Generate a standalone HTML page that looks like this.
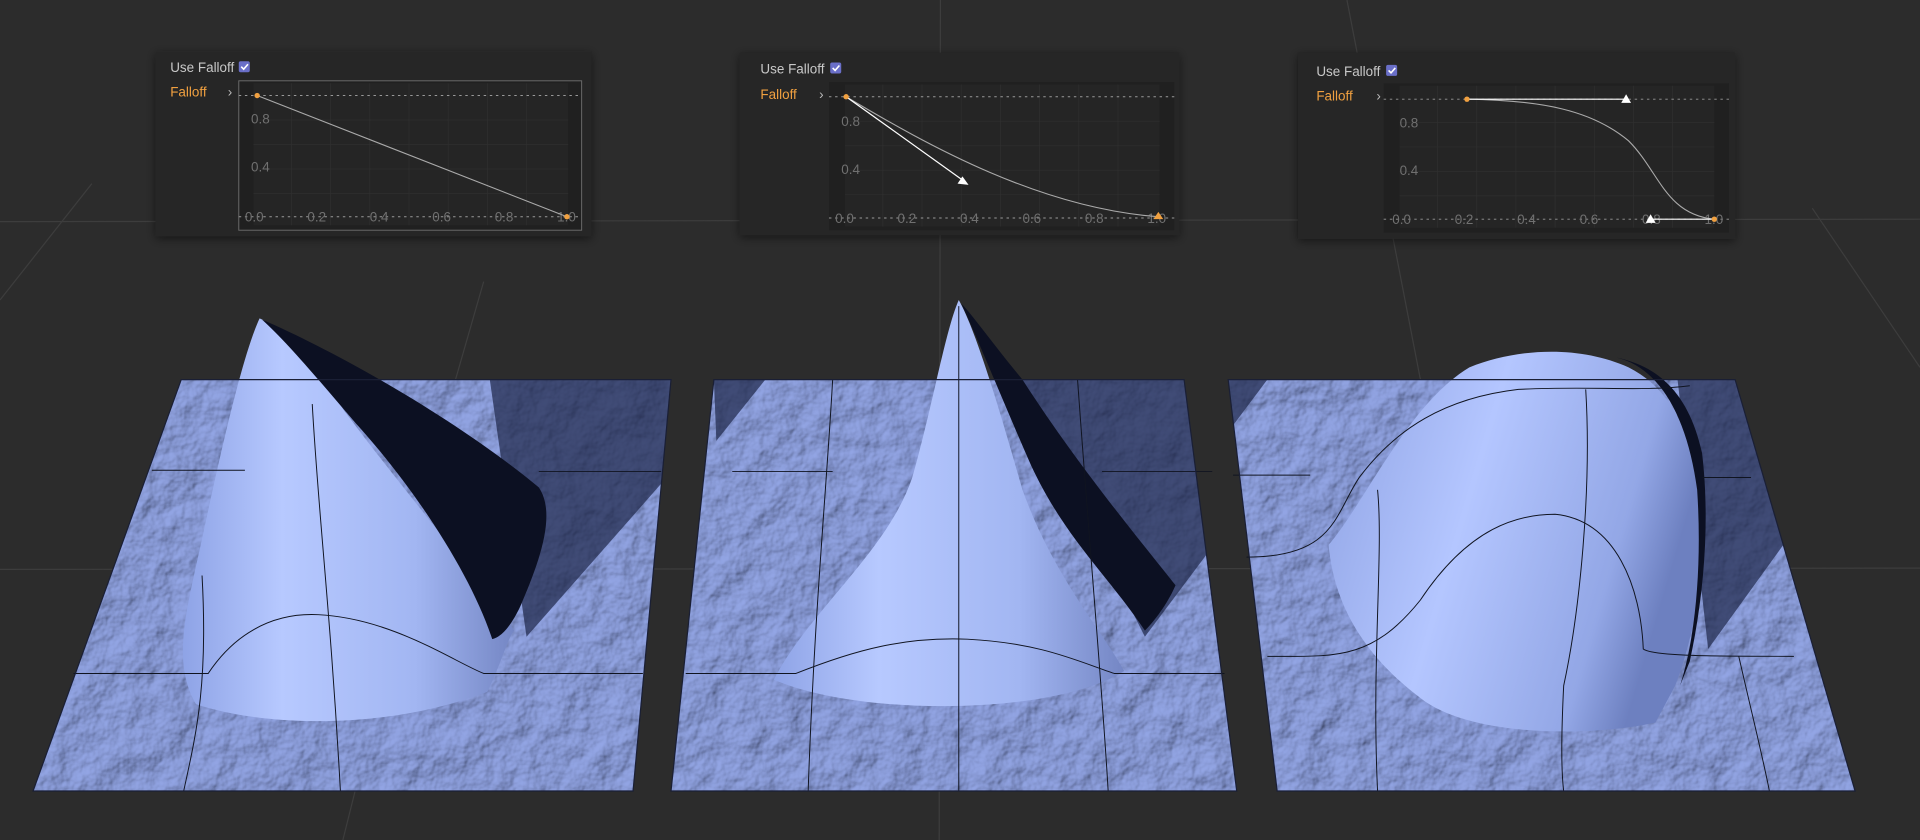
<!DOCTYPE html>
<html><head><meta charset="utf-8"><style>
html,body{margin:0;padding:0;background:#2c2c2c;width:1920px;height:840px;overflow:hidden}
svg{display:block}
text{font-family:"Liberation Sans",sans-serif}
</style></head><body>
<svg width="1920" height="840" viewBox="0 0 1568 686" xmlns="http://www.w3.org/2000/svg">
<defs>
<filter id="tex" x="0" y="0" width="100%" height="100%">
<feTurbulence type="fractalNoise" baseFrequency="0.04" numOctaves="4" seed="3" result="n"/>
<feDiffuseLighting in="n" surfaceScale="5" lighting-color="#a4b6f4" diffuseConstant="1" result="l">
<feDistantLight azimuth="225" elevation="45"/></feDiffuseLighting>
</filter>
<filter id="sh" x="-10%" y="-10%" width="120%" height="130%"><feDropShadow dx="0" dy="2" stdDeviation="4" flood-color="#000" flood-opacity="0.5"/></filter>
<linearGradient id="m1" x1="0" y1="0" x2="1" y2="0"><stop offset="0" stop-color="#8ea3e6"/><stop offset="0.3" stop-color="#b7c9ff"/><stop offset="0.7" stop-color="#a2b6f2"/><stop offset="1" stop-color="#7486c4"/></linearGradient>
<linearGradient id="m3" x1="0" y1="0" x2="1" y2="0.3"><stop offset="0" stop-color="#8ea2e3"/><stop offset="0.45" stop-color="#b4c6ff"/><stop offset="0.85" stop-color="#93a7e6"/><stop offset="1" stop-color="#6d80c0"/></linearGradient>
<clipPath id="p1"><polygon points="148,310 548,310 517,646 27,646"/></clipPath>
<clipPath id="p2"><polygon points="583,310 967,310 1010,646 548,646"/></clipPath>
<clipPath id="p3"><polygon points="1003,310 1417,310 1515,646 1043,646"/></clipPath>
</defs>
<rect width="1568" height="686" fill="#2c2c2c"/>
<g stroke="#3d3d3d" stroke-width="1" fill="none">
<line x1="0" y1="181" x2="1568" y2="179"/><line x1="0" y1="465" x2="1568" y2="464"/>
<line x1="768" y1="0" x2="767" y2="686"/><line x1="0" y1="245" x2="75" y2="150"/>
<line x1="1100" y1="0" x2="1160" y2="310"/><line x1="1480" y1="170" x2="1568" y2="300"/>
<line x1="395" y1="230" x2="372" y2="310"/><line x1="290" y1="646" x2="280" y2="686"/>
</g>
<g filter="url(#sh)">
<rect x="127" y="42" width="356" height="151" fill="#262626"/>
<rect x="604" y="43" width="359" height="149" fill="#262626"/>
<rect x="1060" y="43" width="357" height="152" fill="#262626"/>
</g>
<g font-size="11">
<text x="139" y="59" fill="#c8c8c8">Use Falloff</text>
<rect x="195" y="50" width="9" height="9" rx="1.5" fill="#6a6fc8"/><path d="M197,54.5 l2,2 l3.5,-4" stroke="#fff" stroke-width="1.3" fill="none"/>
<text x="139" y="79" fill="#f0a040">Falloff</text><text x="186" y="79" fill="#bbb">›</text>
<rect x="195" y="66" width="280" height="122" fill="#202020" stroke="#6a6a6a" stroke-width="0.8"/>
<rect x="207" y="68" width="257" height="116" fill="#252525"/>
<g stroke="#2f2f2f" stroke-width="0.6"><path d="M238,68V184M270,68V184M302,68V184M334,68V184M366,68V184M398,68V184M430,68V184M207,98H464M207,118H464M207,138H464M207,158H464"/></g>
<g stroke="#999" stroke-dasharray="2,3" stroke-width="0.8"><line x1="195" y1="78" x2="475" y2="78"/><line x1="195" y1="177" x2="475" y2="177"/></g>
<g fill="#707070"><text x="205" y="101">0.8</text><text x="205" y="140">0.4</text><text x="200" y="181">0.0</text><text x="251" y="181">0.2</text><text x="302" y="181">0.4</text><text x="353" y="181">0.6</text><text x="404" y="181">0.8</text><text x="455" y="181">1.0</text></g>
<line x1="210" y1="78" x2="463" y2="177" stroke="#aaa" stroke-width="0.9"/>
<circle cx="210" cy="78" r="2.2" fill="#f0a040"/><circle cx="463" cy="177" r="2.2" fill="#f0a040"/>
<text x="621" y="60" fill="#c8c8c8">Use Falloff</text>
<rect x="678" y="51" width="9" height="9" rx="1.5" fill="#6a6fc8"/><path d="M680,55.5 l2,2 l3.5,-4" stroke="#fff" stroke-width="1.3" fill="none"/>
<text x="621" y="81" fill="#f0a040">Falloff</text><text x="669" y="81" fill="#bbb">›</text>
<rect x="677" y="67" width="282" height="121" fill="#202020"/>
<rect x="690" y="69" width="257" height="116" fill="#252525"/>
<g stroke="#2f2f2f" stroke-width="0.6"><path d="M721,69V185M753,69V185M785,69V185M817,69V185M849,69V185M881,69V185M913,69V185M690,99H947M690,119H947M690,139H947M690,159H947"/></g>
<g stroke="#999" stroke-dasharray="2,3" stroke-width="0.8"><line x1="677" y1="79" x2="959" y2="79"/><line x1="677" y1="178" x2="959" y2="178"/></g>
<g fill="#707070"><text x="687" y="103">0.8</text><text x="687" y="142">0.4</text><text x="682" y="182">0.0</text><text x="733" y="182">0.2</text><text x="784" y="182">0.4</text><text x="835" y="182">0.6</text><text x="886" y="182">0.8</text><text x="937" y="182">1.0</text></g>
<path d="M691,79 C760,120 850,170 946,177" stroke="#aaa" stroke-width="0.9" fill="none"/>
<line x1="691" y1="79" x2="786" y2="147" stroke="#fff" stroke-width="1"/><polygon points="791,151 782,150 786,144" fill="#fff"/>
<circle cx="691" cy="79" r="2.2" fill="#f0a040"/><polygon points="946,173 942,179 950,179" fill="#f0a040"/>
<text x="1075" y="62" fill="#c8c8c8">Use Falloff</text>
<rect x="1132" y="53" width="9" height="9" rx="1.5" fill="#6a6fc8"/><path d="M1134,57.5 l2,2 l3.5,-4" stroke="#fff" stroke-width="1.3" fill="none"/>
<text x="1075" y="82" fill="#f0a040">Falloff</text><text x="1124" y="82" fill="#bbb">›</text>
<rect x="1130" y="68" width="282" height="122" fill="#202020"/>
<rect x="1143" y="70" width="257" height="116" fill="#252525"/>
<g stroke="#2f2f2f" stroke-width="0.6"><path d="M1174,70V186M1206,70V186M1238,70V186M1270,70V186M1302,70V186M1334,70V186M1366,70V186M1143,100H1400M1143,120H1400M1143,140H1400M1143,160H1400"/></g>
<g stroke="#999" stroke-dasharray="2,3" stroke-width="0.8"><line x1="1130" y1="81" x2="1412" y2="81"/><line x1="1130" y1="179" x2="1412" y2="179"/></g>
<g fill="#707070"><text x="1143" y="104">0.8</text><text x="1143" y="143">0.4</text><text x="1137" y="183">0.0</text><text x="1188" y="183">0.2</text><text x="1239" y="183">0.4</text><text x="1290" y="183">0.6</text><text x="1341" y="183">0.8</text><text x="1392" y="183">1.0</text></g>
<path d="M1198,81 C1260,82 1300,90 1330,115 C1355,140 1360,175 1400,179" stroke="#aaa" stroke-width="0.9" fill="none"/>
<line x1="1198" y1="81" x2="1327" y2="81" stroke="#fff" stroke-width="1"/><polygon points="1328,77 1324,84 1332,84" fill="#fff"/>
<line x1="1350" y1="179" x2="1400" y2="179" stroke="#fff" stroke-width="1"/><polygon points="1348,175 1344,182 1352,182" fill="#fff"/>
<circle cx="1198" cy="81" r="2.2" fill="#f0a040"/><circle cx="1400" cy="179" r="2.2" fill="#f0a040"/>
</g>
<g clip-path="url(#p1)"><rect x="0" y="300" width="560" height="360" fill="#7a8ecf"/><rect x="0" y="300" width="560" height="360" filter="url(#tex)" opacity="0.6"/>
<polygon points="400,310 560,310 540,395 430,520" fill="#1e2748" opacity="0.7"/></g>
<g clip-path="url(#p2)"><rect x="540" y="300" width="480" height="360" fill="#7a8ecf"/><rect x="540" y="300" width="480" height="360" filter="url(#tex)" opacity="0.6"/>
<polygon points="583,310 625,310 585,360" fill="#1e2748" opacity="0.7"/>
<polygon points="830,310 970,310 995,440 935,520" fill="#1e2748" opacity="0.7"/></g>
<g clip-path="url(#p3)"><rect x="1000" y="300" width="520" height="360" fill="#7a8ecf"/><rect x="1000" y="300" width="520" height="360" filter="url(#tex)" opacity="0.6"/>
<polygon points="1003,310 1035,310 1005,350" fill="#1e2748" opacity="0.7"/>
<polygon points="1370,310 1420,310 1460,440 1395,530" fill="#1e2748" opacity="0.7"/></g>
<path d="M212,260 C198,290 180,370 165,440 C152,500 140,540 160,575 C220,595 320,595 398,565 C410,540 415,520 420,515 C390,470 320,390 270,320 C245,290 225,265 212,260Z" fill="url(#m1)"/>
<path d="M214,261 C270,285 370,340 440,398 C455,420 440,460 425,495 C418,510 410,520 402,522 C385,470 340,400 290,345 C260,310 235,280 214,261Z" fill="#0c1022"/>
<path d="M783,245 C772,270 762,330 745,390 C725,450 660,500 632,555 C700,585 860,585 918,548 C900,515 860,470 835,400 C815,330 797,270 783,245Z" fill="url(#m1)"/>
<path d="M785,248 C800,280 820,330 842,380 C870,440 905,470 935,515 C945,505 955,490 960,478 C930,440 880,380 835,310 C810,280 795,258 785,248Z" fill="#0c1022"/>
<path d="M1085,445 C1115,410 1150,330 1200,300 C1240,284 1290,282 1330,300 C1370,320 1385,365 1390,420 C1392,480 1380,530 1368,560 L1352,590 C1300,602 1200,602 1160,570 C1120,540 1090,500 1085,445Z" fill="url(#m3)"/>
<path d="M1320,292 C1355,300 1378,340 1386,400 C1390,460 1385,520 1372,560 L1380,540 C1393,480 1396,420 1390,370 C1380,325 1358,300 1320,292Z" fill="#0c1022"/>
<g stroke="#101420" stroke-width="0.8" fill="none">
<path d="M124,384 H200 M440,385 H540"/><path d="M60,550 H170 C190,520 220,500 260,502 C320,505 370,540 395,550 H525"/>
<path d="M255,330 C260,420 270,500 278,646"/>
<path d="M165,470 C170,560 160,600 150,646"/>
<path d="M598,385 H680 M900,385 H990"/><path d="M560,550 H650 C700,530 740,520 790,522 C850,525 880,540 910,550 H1000"/>
<path d="M680,310 C675,400 665,500 660,646"/><path d="M783,250 V646"/><path d="M880,310 C890,450 900,560 905,646"/>
<path d="M1007,388 H1070 M1390,390 H1430"/><path d="M1018,455 C1090,455 1090,420 1110,390 C1140,350 1180,325 1240,318 C1300,315 1340,320 1380,315"/>
<path d="M1035,536 C1090,536 1120,540 1160,490 C1200,430 1240,420 1270,420 C1320,425 1340,480 1342,530 C1350,536 1400,536 1465,536"/>
<path d="M1125,400 C1130,450 1120,540 1125,646"/>
<path d="M1295,318 C1300,400 1290,500 1277,560 C1275,600 1275,630 1277,646"/>
<path d="M1420,536 C1430,580 1440,620 1445,646"/>
</g>
<g fill="none" stroke="#1a1f35" stroke-width="1"><polygon points="148,310 548,310 517,646 27,646"/><polygon points="583,310 967,310 1010,646 548,646"/><polygon points="1003,310 1417,310 1515,646 1043,646"/></g>
</svg>
</body></html>
